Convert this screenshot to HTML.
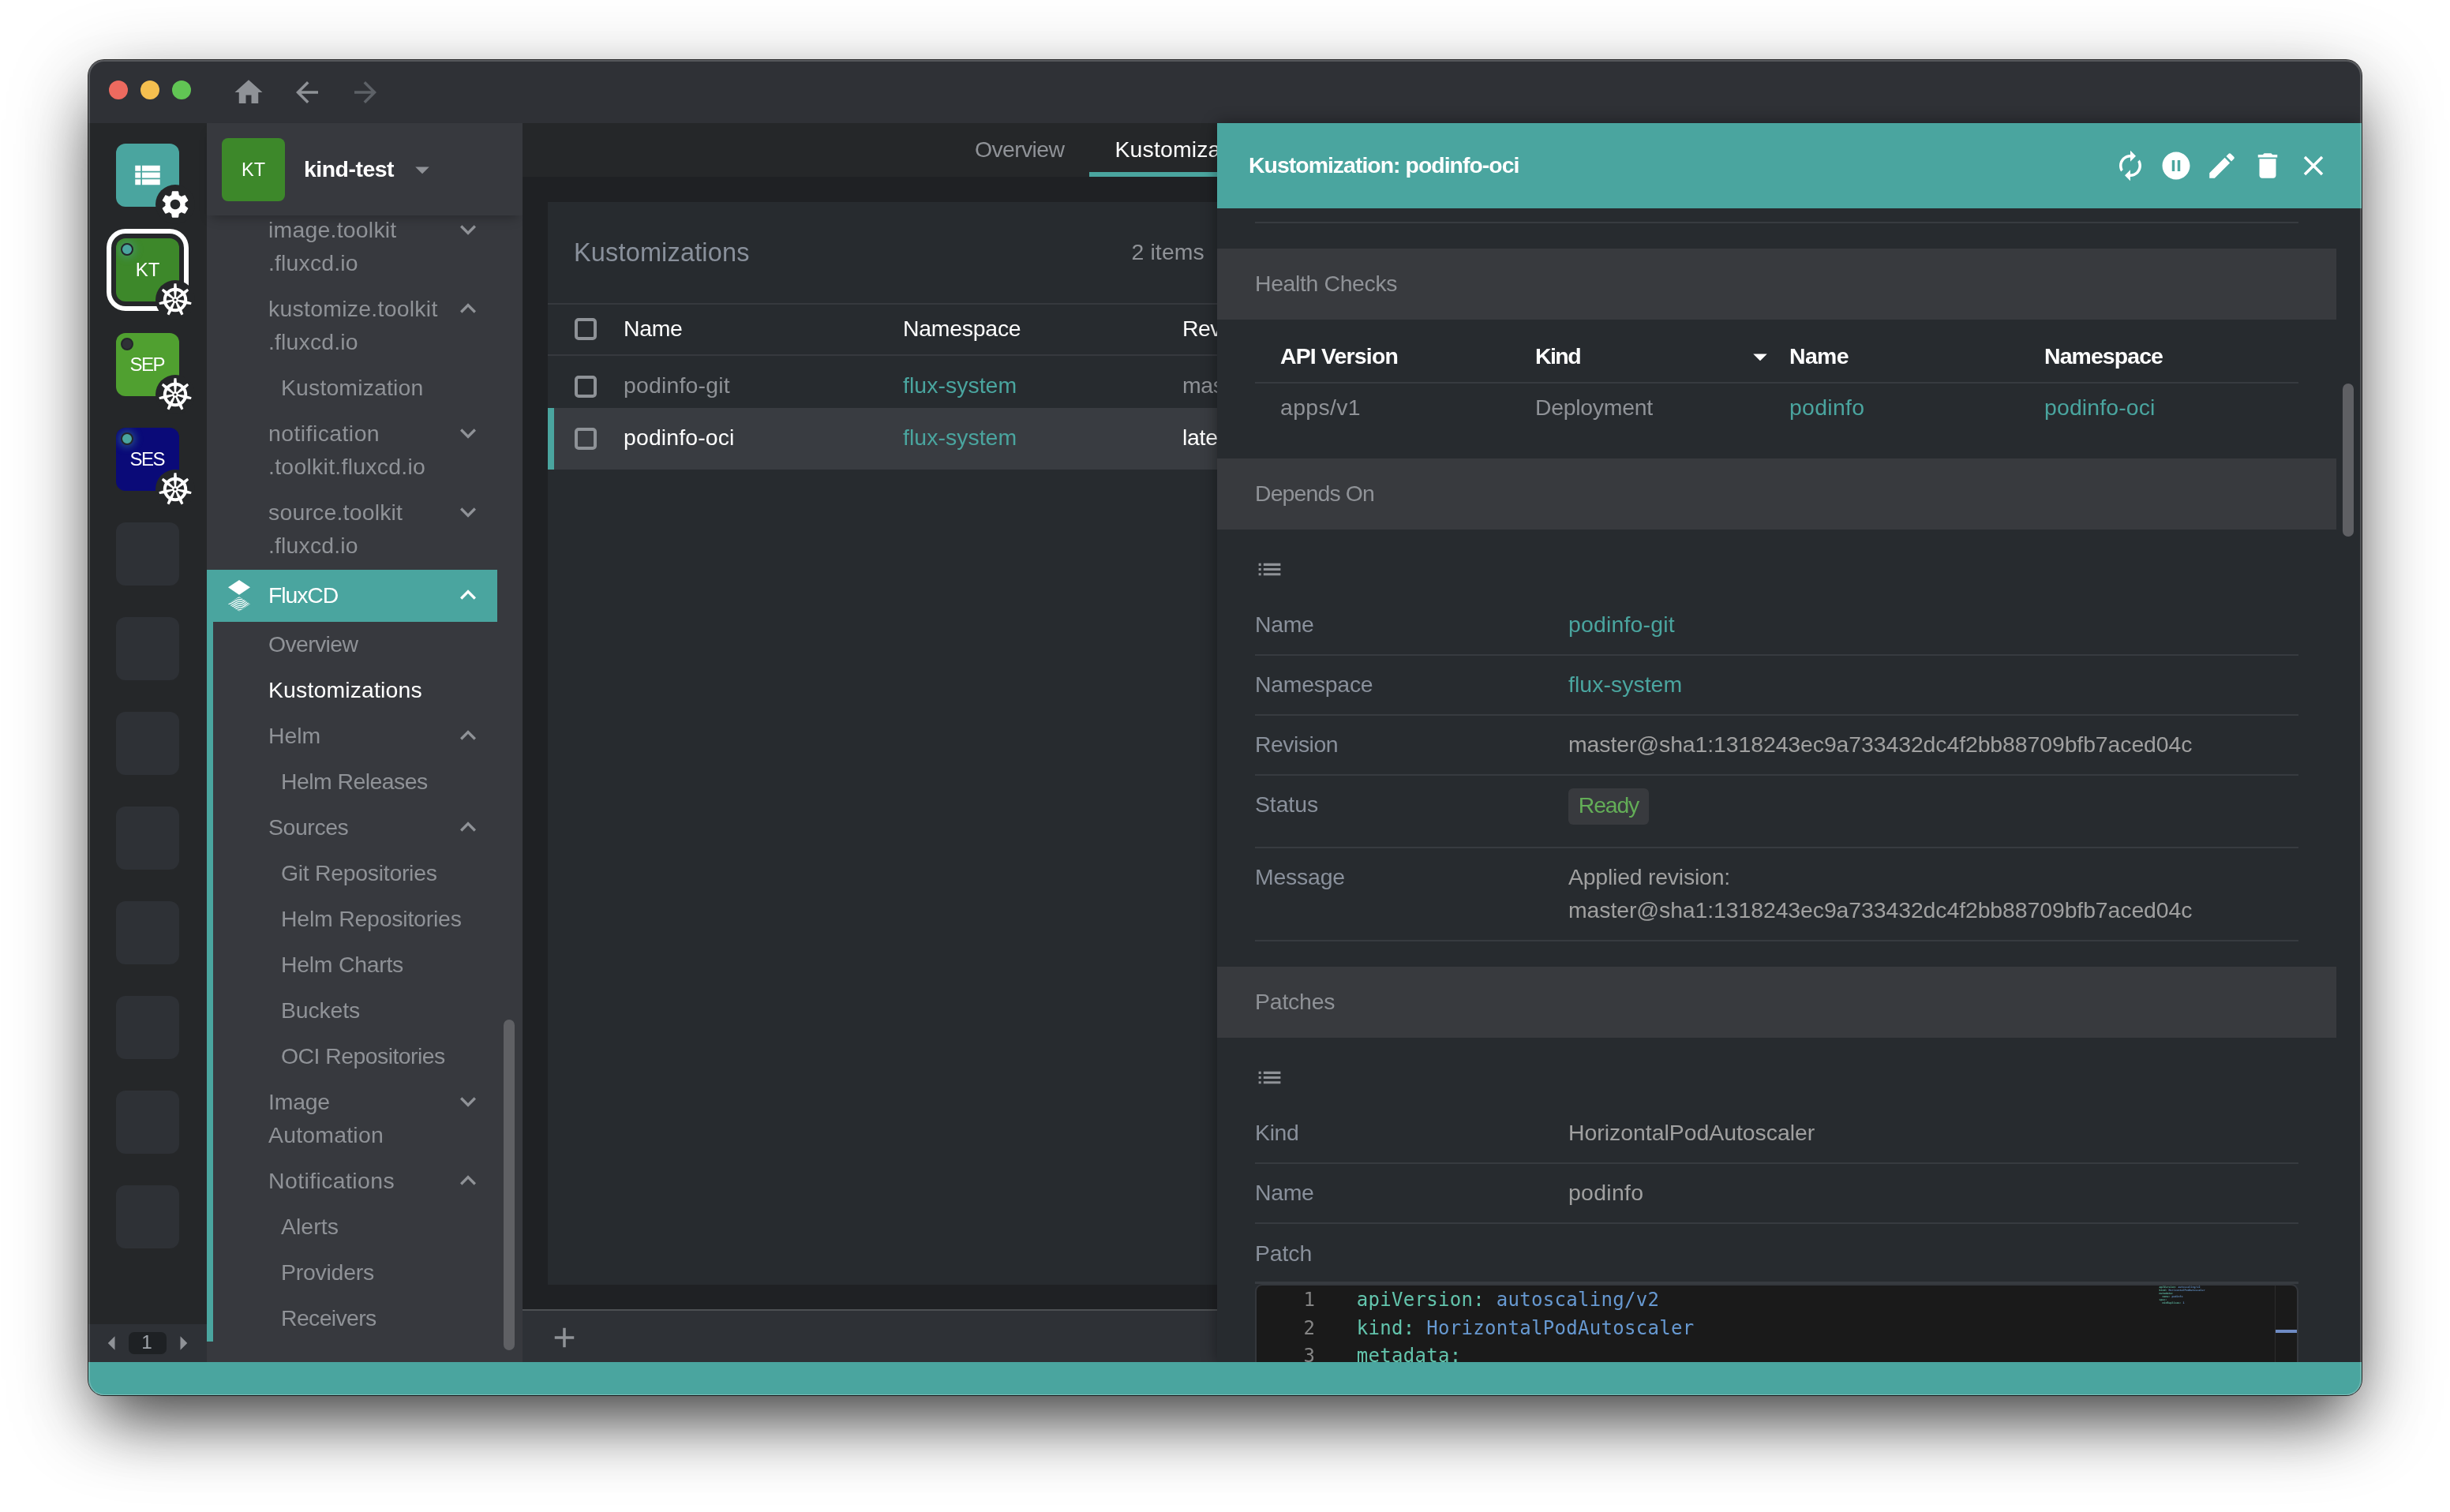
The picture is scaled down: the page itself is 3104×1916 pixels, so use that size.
<!DOCTYPE html>
<html lang="en"><head><meta charset="utf-8"><title>Lens - Kustomization: podinfo-oci</title>
<style>
html,body{margin:0;padding:0;background:#fff;}
body{width:3104px;height:1916px;position:relative;overflow:hidden;font-family:"Liberation Sans",sans-serif;}
.win{position:absolute;left:112px;top:76px;width:2880px;height:1692px;border-radius:20px;overflow:hidden;background:#1e2124;will-change:transform;}
.shadow{position:absolute;left:112px;top:76px;width:2880px;height:1692px;border-radius:20px;
 box-shadow:0 0 0 1px rgba(0,0,0,.8),0 28px 110px -10px rgba(0,0,0,.39),0 43px 82px -18px rgba(0,0,0,.62);}
.rim{position:absolute;left:112px;top:76px;width:2880px;height:1692px;border-radius:20px;box-sizing:border-box;
 border:2px solid rgba(255,255,255,.2);border-bottom:1px solid rgba(255,255,255,.28);pointer-events:none;}
.stage{position:absolute;left:-112px;top:-76px;width:3104px;height:1916px;}
.b,.t,.ic,.clip{position:absolute;}
.t{white-space:nowrap;}
.m{font-family:"DejaVu Sans Mono","Liberation Mono",monospace;}
.clip{overflow:hidden;}
</style></head>
<body>
<div class="shadow"></div>
<div class="win"><div class="stage">
<div class="b" style="left:112px;top:76px;width:2880px;height:80px;background:#2f3136;"></div>
<div class="b" style="left:138px;top:102px;width:24px;height:24px;border-radius:50%;background:#ed6a5f"></div>
<div class="b" style="left:178px;top:102px;width:24px;height:24px;border-radius:50%;background:#f5bf4f"></div>
<div class="b" style="left:218px;top:102px;width:24px;height:24px;border-radius:50%;background:#61c554"></div>
<svg class="ic" style="left:294.1px;top:96.1px;width:42px;height:42px;" viewBox="0 0 24 24"><path fill="#8f9297" d="M10 20v-6h4v6h5v-8h3L12 3 2 12h3v8z"/></svg>
<svg class="ic" style="left:367.9px;top:95.9px;width:42px;height:42px;" viewBox="0 0 24 24"><path fill="#8f9297" d="M20 11H7.83l5.59-5.59L12 4l-8 8 8 8 1.41-1.41L7.83 13H20v-2z"/></svg>
<svg class="ic" style="left:441.9px;top:95.9px;width:42px;height:42px;" viewBox="0 0 24 24"><path fill="#5d6167" d="M12 4l-1.41 1.41L16.17 11H4v2h12.17l-5.58 5.59L12 20l8-8z"/></svg>
<div class="b" style="left:112px;top:156px;width:150px;height:1570px;background:#252729;"></div>
<div class="b" style="left:147px;top:662px;width:80px;height:80px;background:#2e3136;border-radius:12px"></div>
<div class="b" style="left:147px;top:782px;width:80px;height:80px;background:#2e3136;border-radius:12px"></div>
<div class="b" style="left:147px;top:902px;width:80px;height:80px;background:#2e3136;border-radius:12px"></div>
<div class="b" style="left:147px;top:1022px;width:80px;height:80px;background:#2e3136;border-radius:12px"></div>
<div class="b" style="left:147px;top:1142px;width:80px;height:80px;background:#2e3136;border-radius:12px"></div>
<div class="b" style="left:147px;top:1262px;width:80px;height:80px;background:#2e3136;border-radius:12px"></div>
<div class="b" style="left:147px;top:1382px;width:80px;height:80px;background:#2e3136;border-radius:12px"></div>
<div class="b" style="left:147px;top:1502px;width:80px;height:80px;background:#2e3136;border-radius:12px"></div>
<div class="b" style="left:147px;top:182px;width:80px;height:80px;background:#4aa59f;border-radius:12px"></div>
<svg class="ic" style="left:166.0px;top:201.0px;width:42px;height:42px;" viewBox="0 0 24 24"><path fill="#fff" d="M3 14h4v-4H3v4zm0 5h4v-4H3v4zM3 9h4V5H3v4zm5 5h13v-4H8v4zm0 5h13v-4H8v4zM8 5v4h13V5H8z"/></svg>
<div class="b" style="left:197px;top:234.4px;width:50px;height:50px;border-radius:50%;background:#252729"></div>
<svg class="ic" style="left:201.0px;top:238.4px;width:42px;height:42px;" viewBox="0 0 24 24"><path fill="#fff" d="M19.14 12.94c.04-.3.06-.61.06-.94 0-.32-.02-.64-.07-.94l2.03-1.58c.18-.14.23-.41.12-.61l-1.92-3.32c-.12-.22-.37-.29-.59-.22l-2.39.96c-.5-.38-1.03-.7-1.62-.94l-.36-2.54c-.04-.24-.24-.41-.48-.41h-3.84c-.24 0-.43.17-.47.41l-.36 2.54c-.59.24-1.13.57-1.62.94l-2.39-.96c-.22-.08-.47 0-.59.22L2.74 8.87c-.12.21-.08.47.12.61l2.03 1.58c-.05.3-.09.63-.09.94s.02.64.07.94l-2.03 1.58c-.18.14-.23.41-.12.61l1.92 3.32c.12.22.37.29.59.22l2.39-.96c.5.38 1.03.7 1.62.94l.36 2.54c.05.24.24.41.48.41h3.84c.24 0 .44-.17.47-.41l.36-2.54c.59-.24 1.13-.56 1.62-.94l2.39.96c.22.08.47 0 .59-.22l1.92-3.32c.12-.22.07-.47-.12-.61l-2.01-1.58zM12 15.6c-1.98 0-3.6-1.62-3.6-3.6s1.62-3.6 3.6-3.6 3.6 1.62 3.6 3.6-1.62 3.6-3.6 3.6z"/></svg>
<div class="b" style="left:147px;top:302px;width:80px;height:80px;background:#3d882a;border-radius:12px;box-shadow:0 0 0 6px #252729,0 0 0 12px #fff;"><div class="b" style="left:0;top:0;width:80px;height:80px;border-radius:12px;overflow:hidden"><div class="b" style="left:6px;top:6px;width:16px;height:16px;box-sizing:border-box;border-radius:50%;background:#4aa59f;border:2px solid #23262a;box-shadow:0 0 10px 3px #4aa59f66;"></div></div><div class="t" style="left:0;top:0;width:80px;height:80px;line-height:80px;text-align:center;font-size:24px;color:#fff">KT</div></div>
<div class="b" style="left:197px;top:355px;width:50px;height:50px;border-radius:50%;background:#252729"></div>
<svg class="ic" style="left:198.0px;top:356.0px;width:48px;height:48px" viewBox="-24 -24 48 48"><circle r="13.2" fill="none" stroke="#fff" stroke-width="4"/><polygon fill="#fff" points="0.90,-2.00 2.10,-13.20 1.50,-20.80 -1.50,-20.80 -2.10,-13.20 -0.90,-2.00"/><polygon fill="#fff" points="2.12,-0.54 11.63,-6.59 17.20,-11.80 15.33,-14.14 9.01,-9.87 1.00,-1.95"/><polygon fill="#fff" points="1.75,1.32 12.40,4.98 19.94,6.09 20.61,3.17 13.34,0.89 2.15,-0.43"/><polygon fill="#fff" points="0.06,2.19 3.84,12.80 7.67,19.39 10.38,18.09 7.62,10.98 1.68,1.41"/><polygon fill="#fff" points="-1.68,1.41 -7.62,10.98 -10.38,18.09 -7.67,19.39 -3.84,12.80 -0.06,2.19"/><polygon fill="#fff" points="-2.15,-0.43 -13.34,0.89 -20.61,3.17 -19.94,6.09 -12.40,4.98 -1.75,1.32"/><polygon fill="#fff" points="-1.00,-1.95 -9.01,-9.87 -15.33,-14.14 -17.20,-11.80 -11.63,-6.59 -2.12,-0.54"/><circle r="3.8" fill="#fff"/><circle r="1.6" fill="#252729"/></svg>
<div class="b" style="left:147px;top:422px;width:80px;height:80px;background:#50a030;border-radius:12px;"><div class="b" style="left:0;top:0;width:80px;height:80px;border-radius:12px;overflow:hidden"><div class="b" style="left:6px;top:6px;width:16px;height:16px;box-sizing:border-box;border-radius:50%;background:#2f3136;border:2px solid #23262a;"></div></div><div class="t" style="left:0;top:0;width:80px;height:80px;line-height:80px;text-align:center;font-size:24px;letter-spacing:-1.4px;text-indent:-1.4px;color:#fff">SEP</div></div>
<div class="b" style="left:197px;top:475px;width:50px;height:50px;border-radius:50%;background:#252729"></div>
<svg class="ic" style="left:198.0px;top:476.0px;width:48px;height:48px" viewBox="-24 -24 48 48"><circle r="13.2" fill="none" stroke="#fff" stroke-width="4"/><polygon fill="#fff" points="0.90,-2.00 2.10,-13.20 1.50,-20.80 -1.50,-20.80 -2.10,-13.20 -0.90,-2.00"/><polygon fill="#fff" points="2.12,-0.54 11.63,-6.59 17.20,-11.80 15.33,-14.14 9.01,-9.87 1.00,-1.95"/><polygon fill="#fff" points="1.75,1.32 12.40,4.98 19.94,6.09 20.61,3.17 13.34,0.89 2.15,-0.43"/><polygon fill="#fff" points="0.06,2.19 3.84,12.80 7.67,19.39 10.38,18.09 7.62,10.98 1.68,1.41"/><polygon fill="#fff" points="-1.68,1.41 -7.62,10.98 -10.38,18.09 -7.67,19.39 -3.84,12.80 -0.06,2.19"/><polygon fill="#fff" points="-2.15,-0.43 -13.34,0.89 -20.61,3.17 -19.94,6.09 -12.40,4.98 -1.75,1.32"/><polygon fill="#fff" points="-1.00,-1.95 -9.01,-9.87 -15.33,-14.14 -17.20,-11.80 -11.63,-6.59 -2.12,-0.54"/><circle r="3.8" fill="#fff"/><circle r="1.6" fill="#252729"/></svg>
<div class="b" style="left:147px;top:542px;width:80px;height:80px;background:#0a0a78;border-radius:12px;"><div class="b" style="left:0;top:0;width:80px;height:80px;border-radius:12px;overflow:hidden"><div class="b" style="left:6px;top:6px;width:16px;height:16px;box-sizing:border-box;border-radius:50%;background:#4aa59f;border:2px solid #23262a;box-shadow:0 0 10px 3px #4aa59f66;"></div></div><div class="t" style="left:0;top:0;width:80px;height:80px;line-height:80px;text-align:center;font-size:24px;letter-spacing:-1.4px;text-indent:-1.4px;color:#fff">SES</div></div>
<div class="b" style="left:197px;top:595px;width:50px;height:50px;border-radius:50%;background:#252729"></div>
<svg class="ic" style="left:198.0px;top:596.0px;width:48px;height:48px" viewBox="-24 -24 48 48"><circle r="13.2" fill="none" stroke="#fff" stroke-width="4"/><polygon fill="#fff" points="0.90,-2.00 2.10,-13.20 1.50,-20.80 -1.50,-20.80 -2.10,-13.20 -0.90,-2.00"/><polygon fill="#fff" points="2.12,-0.54 11.63,-6.59 17.20,-11.80 15.33,-14.14 9.01,-9.87 1.00,-1.95"/><polygon fill="#fff" points="1.75,1.32 12.40,4.98 19.94,6.09 20.61,3.17 13.34,0.89 2.15,-0.43"/><polygon fill="#fff" points="0.06,2.19 3.84,12.80 7.67,19.39 10.38,18.09 7.62,10.98 1.68,1.41"/><polygon fill="#fff" points="-1.68,1.41 -7.62,10.98 -10.38,18.09 -7.67,19.39 -3.84,12.80 -0.06,2.19"/><polygon fill="#fff" points="-2.15,-0.43 -13.34,0.89 -20.61,3.17 -19.94,6.09 -12.40,4.98 -1.75,1.32"/><polygon fill="#fff" points="-1.00,-1.95 -9.01,-9.87 -15.33,-14.14 -17.20,-11.80 -11.63,-6.59 -2.12,-0.54"/><circle r="3.8" fill="#fff"/><circle r="1.6" fill="#252729"/></svg>
<div class="b" style="left:112px;top:1678px;width:150px;height:48px;background:#2e3136;"></div>
<svg class="ic" style="left:121.4px;top:1681.0px;width:42px;height:42px;" viewBox="0 0 24 24"><path fill="#8f9297" d="M14 7l-5 5 5 5V7z"/></svg>
<svg class="ic" style="left:210.7px;top:1681.0px;width:42px;height:42px;" viewBox="0 0 24 24"><path fill="#8f9297" d="M10 17l5-5-5-5v10z"/></svg>
<div class="b" style="left:163px;top:1688px;width:48px;height:28px;background:#1e2124;border-radius:7px"></div>
<div class="t" style="left:162.0px;top:1683.4px;font-size:24.36px;line-height:36px;color:#a0a5ab;width:48px;text-align:center;"><span style="letter-spacing:-0.086px">1</span></div>
<div class="b" style="left:262px;top:156px;width:400px;height:1570px;background:#37393e;"></div>
<div class="clip" style="left:262px;top:273px;width:400px;height:1453px"><div class="stage" style="left:-262px;top:-273px">
<div class="t" style="left:340px;top:269.5px;font-size:28.42px;line-height:42px;color:#8f9297"><span style="letter-spacing:0.232px">image.toolkit</span><br><span style="letter-spacing:0.165px">.fluxcd.io</span></div><svg class="ic" style="left:573.0px;top:271.3px;width:40px;height:40px;" viewBox="0 0 24 24"><path fill="#8f9297" d="M7.41 8.59L12 13.17l4.59-4.58L18 10l-6 6-6-6 1.41-1.41z"/></svg>
<div class="t" style="left:340px;top:369.5px;font-size:28.42px;line-height:42px;color:#8f9297"><span style="letter-spacing:0.272px">kustomize.toolkit</span><br><span style="letter-spacing:0.165px">.fluxcd.io</span></div><svg class="ic" style="left:573.0px;top:371.3px;width:40px;height:40px;" viewBox="0 0 24 24"><path fill="#8f9297" d="M7.41 15.41L12 10.83l4.59 4.58L18 14l-6-6-6 6z"/></svg>
<div class="t" style="left:356px;top:469.5px;font-size:28.42px;line-height:42px;color:#8f9297"><span style="letter-spacing:0.147px">Kustomization</span></div>
<div class="t" style="left:340px;top:527.5px;font-size:28.42px;line-height:42px;color:#8f9297"><span style="letter-spacing:0.442px">notification</span><br><span style="letter-spacing:0.275px">.toolkit.fluxcd.io</span></div><svg class="ic" style="left:573.0px;top:529.3px;width:40px;height:40px;" viewBox="0 0 24 24"><path fill="#8f9297" d="M7.41 8.59L12 13.17l4.59-4.58L18 10l-6 6-6-6 1.41-1.41z"/></svg>
<div class="t" style="left:340px;top:627.5px;font-size:28.42px;line-height:42px;color:#8f9297"><span style="letter-spacing:0.201px">source.toolkit</span><br><span style="letter-spacing:0.165px">.fluxcd.io</span></div><svg class="ic" style="left:573.0px;top:629.3px;width:40px;height:40px;" viewBox="0 0 24 24"><path fill="#8f9297" d="M7.41 8.59L12 13.17l4.59-4.58L18 10l-6 6-6-6 1.41-1.41z"/></svg>
<div class="b" style="left:262px;top:722px;width:368px;height:66px;background:#4aa59f;"></div><div class="t" style="left:340px;top:732.5px;font-size:28.42px;line-height:42px;color:#fff"><span style="letter-spacing:-1.091px">FluxCD</span></div><svg class="ic" style="left:573.0px;top:734.3px;width:40px;height:40px;" viewBox="0 0 24 24"><path fill="#fff" d="M7.41 15.41L12 10.83l4.59 4.58L18 14l-6-6-6 6z"/></svg>
<svg class="ic" style="left:289.0px;top:735.0px;width:28px;height:40px" viewBox="0 0 28 40"><path fill="#fff" d="M14 0 L28 9.3 L14 18.7 L0 9.3 Z"/><defs><clipPath id="fxc"><path d="M14 21 L28 30.3 L14 39.7 L0 30.3 Z"/></clipPath></defs><g clip-path="url(#fxc)" fill="none" stroke="#fff" stroke-width="1.25"><path d="M-2 22.8 C 6 23.8, 9 15.8, 15 16.8 S 24 8.8, 30 9.8"/><path d="M-2 25.4 C 6 26.4, 9 18.4, 15 19.4 S 24 11.4, 30 12.4"/><path d="M-2 28.0 C 6 29.0, 9 21.0, 15 22.0 S 24 14.0, 30 15.0"/><path d="M-2 30.6 C 6 31.6, 9 23.6, 15 24.6 S 24 16.6, 30 17.6"/><path d="M-2 33.2 C 6 34.2, 9 26.2, 15 27.2 S 24 19.2, 30 20.2"/><path d="M-2 35.8 C 6 36.8, 9 28.8, 15 29.8 S 24 21.8, 30 22.8"/><path d="M-2 38.4 C 6 39.4, 9 31.4, 15 32.4 S 24 24.4, 30 25.4"/><path d="M-2 41.0 C 6 42.0, 9 34.0, 15 35.0 S 24 27.0, 30 28.0"/><path d="M-2 43.6 C 6 44.6, 9 36.6, 15 37.6 S 24 29.6, 30 30.6"/><path d="M-2 46.2 C 6 47.2, 9 39.2, 15 40.2 S 24 32.2, 30 33.2"/><path d="M-2 48.8 C 6 49.8, 9 41.8, 15 42.8 S 24 34.8, 30 35.8"/><path d="M-2 51.4 C 6 52.4, 9 44.4, 15 45.4 S 24 37.4, 30 38.4"/><path d="M-2 54.0 C 6 55.0, 9 47.0, 15 48.0 S 24 40.0, 30 41.0"/><path d="M-2 56.6 C 6 57.6, 9 49.6, 15 50.6 S 24 42.6, 30 43.6"/></g></svg>
<div class="b" style="left:262px;top:788px;width:8px;height:912px;background:#4aa59f;"></div>
<div class="t" style="left:340px;top:794.5px;font-size:28.42px;line-height:42px;color:#8f9297"><span style="letter-spacing:-0.631px">Overview</span></div>
<div class="t" style="left:340px;top:852.5px;font-size:28.42px;line-height:42px;color:#fff"><span style="letter-spacing:0.153px">Kustomizations</span></div>
<div class="t" style="left:340px;top:910.5px;font-size:28.42px;line-height:42px;color:#8f9297"><span style="letter-spacing:-0.042px">Helm</span></div><svg class="ic" style="left:573.0px;top:912.3px;width:40px;height:40px;" viewBox="0 0 24 24"><path fill="#8f9297" d="M7.41 15.41L12 10.83l4.59 4.58L18 14l-6-6-6 6z"/></svg>
<div class="t" style="left:356px;top:968.5px;font-size:28.42px;line-height:42px;color:#8f9297"><span style="letter-spacing:-0.531px">Helm Releases</span></div>
<div class="t" style="left:340px;top:1026.5px;font-size:28.42px;line-height:42px;color:#8f9297"><span style="letter-spacing:-0.402px">Sources</span></div><svg class="ic" style="left:573.0px;top:1028.3px;width:40px;height:40px;" viewBox="0 0 24 24"><path fill="#8f9297" d="M7.41 15.41L12 10.83l4.59 4.58L18 14l-6-6-6 6z"/></svg>
<div class="t" style="left:356px;top:1084.5px;font-size:28.42px;line-height:42px;color:#8f9297"><span style="letter-spacing:-0.281px">Git Repositories</span></div>
<div class="t" style="left:356px;top:1142.5px;font-size:28.42px;line-height:42px;color:#8f9297"><span style="letter-spacing:-0.199px">Helm Repositories</span></div>
<div class="t" style="left:356px;top:1200.5px;font-size:28.42px;line-height:42px;color:#8f9297"><span style="letter-spacing:-0.259px">Helm Charts</span></div>
<div class="t" style="left:356px;top:1258.5px;font-size:28.42px;line-height:42px;color:#8f9297"><span style="letter-spacing:-0.133px">Buckets</span></div>
<div class="t" style="left:356px;top:1316.5px;font-size:28.42px;line-height:42px;color:#8f9297"><span style="letter-spacing:-0.539px">OCI Repositories</span></div>
<div class="t" style="left:340px;top:1374.5px;font-size:28.42px;line-height:42px;color:#8f9297"><span style="letter-spacing:-0.205px">Image</span><br><span style="letter-spacing:0.223px">Automation</span></div><svg class="ic" style="left:573.0px;top:1376.3px;width:40px;height:40px;" viewBox="0 0 24 24"><path fill="#8f9297" d="M7.41 8.59L12 13.17l4.59-4.58L18 10l-6 6-6-6 1.41-1.41z"/></svg>
<div class="t" style="left:340px;top:1474.5px;font-size:28.42px;line-height:42px;color:#8f9297"><span style="letter-spacing:0.410px">Notifications</span></div><svg class="ic" style="left:573.0px;top:1476.3px;width:40px;height:40px;" viewBox="0 0 24 24"><path fill="#8f9297" d="M7.41 15.41L12 10.83l4.59 4.58L18 14l-6-6-6 6z"/></svg>
<div class="t" style="left:356px;top:1532.5px;font-size:28.42px;line-height:42px;color:#8f9297"><span style="letter-spacing:0.055px">Alerts</span></div>
<div class="t" style="left:356px;top:1590.5px;font-size:28.42px;line-height:42px;color:#8f9297"><span style="letter-spacing:-0.220px">Providers</span></div>
<div class="t" style="left:356px;top:1648.5px;font-size:28.42px;line-height:42px;color:#8f9297"><span style="letter-spacing:-0.625px">Receivers</span></div>
</div></div>
<div class="b" style="left:638px;top:1292px;width:14px;height:419px;background:#5f6064;border-radius:7px"></div>
<div class="b" style="left:262px;top:156px;width:400px;height:117px;background:#37393e;box-shadow:0 8px 14px -6px rgba(0,0,0,.3)"></div>
<div class="b" style="left:281px;top:175px;width:80px;height:80px;background:#3d882a;border-radius:8px"></div>
<div class="t" style="left:281px;top:175px;width:80px;height:80px;line-height:80px;text-align:center;font-size:23.5px;color:#fff">KT</div>
<div class="t" style="left:385.0px;top:193.0px;font-size:28.42px;line-height:42px;color:#fff;font-weight:700;"><span style="letter-spacing:-0.486px">kind-test</span></div>
<svg class="ic" style="left:514.3px;top:193.8px;width:42px;height:42px;" viewBox="0 0 24 24"><path fill="#8f9297" d="M7 10l5 5 5-5z"/></svg>
<div class="b" style="left:662px;top:156px;width:2330px;height:1570px;background:#1f2124;"></div>
<div class="b" style="left:662px;top:156px;width:2330px;height:68px;background:#252729;"></div>
<div class="t" style="left:1235.0px;top:168.0px;font-size:28.42px;line-height:42px;color:#8f9297;"><span style="letter-spacing:-0.631px">Overview</span></div>
<div class="t" style="left:1412.5px;top:168.0px;font-size:28.42px;line-height:42px;color:#fff;"><span style="letter-spacing:0.153px">Kustomizations</span></div>
<div class="b" style="left:1380px;top:218px;width:260px;height:6px;background:#4aa59f;"></div>
<div class="b" style="left:694px;top:256px;width:2266px;height:1372px;background:#272b2f;"></div>
<div class="t" style="left:727.0px;top:295.7px;font-size:32.48px;line-height:48px;color:#89909b;"><span style="letter-spacing:0.173px">Kustomizations</span></div>
<div class="t" style="left:1433.5px;top:298.2px;font-size:28.42px;line-height:42px;color:#8f9297;"><span style="letter-spacing:0.121px">2 items</span></div>
<div class="b" style="left:694px;top:384px;width:2266px;height:2px;background:#36393e;"></div>
<div class="b" style="left:694px;top:449px;width:2266px;height:2px;background:#36393e;"></div>
<div class="b" style="left:728px;top:403px;width:28px;height:28px;box-sizing:border-box;border:4px solid #8e9297;border-radius:5px"></div>
<div class="t" style="left:790.0px;top:395.2px;font-size:28.42px;line-height:42px;color:#fff;"><span style="letter-spacing:-0.304px">Name</span></div>
<div class="t" style="left:1144.0px;top:395.2px;font-size:28.42px;line-height:42px;color:#fff;"><span style="letter-spacing:-0.238px">Namespace</span></div>
<div class="t" style="left:1498.0px;top:395.2px;font-size:28.42px;line-height:42px;color:#fff;"><span style="letter-spacing:-0.482px">Revision</span></div>
<div class="b" style="left:728px;top:476px;width:28px;height:28px;box-sizing:border-box;border:4px solid #8e9297;border-radius:5px"></div>
<div class="t" style="left:790.0px;top:466.8px;font-size:28.42px;line-height:42px;color:#8f9297;"><span style="letter-spacing:0.193px">podinfo-git</span></div>
<div class="t" style="left:1144.0px;top:466.8px;font-size:28.42px;line-height:42px;color:#4aa59f;"><span style="letter-spacing:0.049px">flux-system</span></div>
<div class="t" style="left:1498.0px;top:466.8px;font-size:28.42px;line-height:42px;color:#8f9297;white-space:nowrap;"><span style="letter-spacing:-0.312px">master@sha1:1318243e</span></div>
<div class="b" style="left:694px;top:517px;width:2266px;height:78px;background:#393c41;"></div>
<div class="b" style="left:694px;top:517px;width:8px;height:78px;background:#4aa59f;"></div>
<div class="b" style="left:728px;top:542px;width:28px;height:28px;box-sizing:border-box;border:4px solid #8e9297;border-radius:5px"></div>
<div class="t" style="left:790.0px;top:533.2px;font-size:28.42px;line-height:42px;color:#fff;"><span style="letter-spacing:0.143px">podinfo-oci</span></div>
<div class="t" style="left:1144.0px;top:533.2px;font-size:28.42px;line-height:42px;color:#4aa59f;"><span style="letter-spacing:0.049px">flux-system</span></div>
<div class="t" style="left:1498.0px;top:533.2px;font-size:28.42px;line-height:42px;color:#fff;white-space:nowrap;"><span style="letter-spacing:-0.290px">latest@sha256:</span></div>
<div class="b" style="left:662px;top:1660px;width:2330px;height:66px;background:#2e3136;"></div>
<div class="b" style="left:662px;top:1659px;width:2330px;height:2px;background:#4d5053;"></div>
<svg class="ic" style="left:693.9px;top:1674.0px;width:42px;height:42px;" viewBox="0 0 24 24"><path fill="#8f9297" d="M19 13h-6v6h-2v-6H5v-2h6V5h2v6h6v2z"/></svg>
<div class="b" style="left:1542px;top:156px;width:1450px;height:1570px;background:#272b2f;box-shadow:0 0 18px rgba(0,0,0,.4)"></div>
<div class="b" style="left:1542px;top:156px;width:1450px;height:108px;background:#4aa59f;"></div>
<div class="t" style="left:1582.0px;top:187.9px;font-size:28.42px;line-height:42px;color:#fff;font-weight:700;"><span style="letter-spacing:-0.968px">Kustomization: podinfo-oci</span></div>
<svg class="ic" style="left:2678.4px;top:189.0px;width:42px;height:42px;" viewBox="0 0 24 24"><path fill="#fff" d="M12 6v3l4-4-4-4v3c-4.42 0-8 3.58-8 8 0 1.57.46 3.03 1.24 4.26L6.7 14.8c-.45-.83-.7-1.79-.7-2.8 0-3.31 2.69-6 6-6zm6.76 1.74L17.3 9.2c.44.84.7 1.79.7 2.8 0 3.31-2.69 6-6 6v-3l-4 4 4 4v-3c4.42 0 8-3.58 8-8 0-1.57-.46-3.03-1.24-4.26z"/></svg>
<svg class="ic" style="left:2735.8px;top:189.0px;width:42px;height:42px;" viewBox="0 0 24 24"><path fill="#fff" d="M12 2C6.48 2 2 6.48 2 12s4.48 10 10 10 10-4.48 10-10S17.52 2 12 2zm-1 14H9V8h2v8zm4 0h-2V8h2v8z"/></svg>
<svg class="ic" style="left:2793.9px;top:189.0px;width:42px;height:42px;" viewBox="0 0 24 24"><path fill="#fff" d="M3 17.25V21h3.75L17.81 9.94l-3.75-3.75L3 17.25zM20.71 7.04c.39-.39.39-1.02 0-1.41l-2.34-2.34c-.39-.39-1.02-.39-1.41 0l-1.83 1.83 3.75 3.75 1.83-1.83z"/></svg>
<svg class="ic" style="left:2851.7px;top:189.0px;width:42px;height:42px;" viewBox="0 0 24 24"><path fill="#fff" d="M6 19c0 1.1.9 2 2 2h8c1.1 0 2-.9 2-2V7H6v12zM19 4h-3.5l-1-1h-5l-1 1H5v2h14V4z"/></svg>
<svg class="ic" style="left:2909.8px;top:189.0px;width:42px;height:42px;" viewBox="0 0 24 24"><path fill="#fff" d="M19 6.41L17.59 5 12 10.59 6.41 5 5 6.41 10.59 12 5 17.59 6.41 19 12 13.41 17.59 19 19 17.59 13.41 12z"/></svg>
<div class="b" style="left:1590px;top:281px;width:1322px;height:2px;background:#373b40;"></div>
<div class="b" style="left:1542px;top:315px;width:1418px;height:90px;background:#383a3e;"></div><div class="t" style="left:1590.0px;top:337.8px;font-size:28.42px;line-height:42px;color:#8f9297;"><span style="letter-spacing:-0.358px">Health Checks</span></div>
<div class="t" style="left:1622.0px;top:429.7px;font-size:28.42px;line-height:42px;color:#fff;font-weight:700;"><span style="letter-spacing:-0.807px">API Version</span></div>
<div class="t" style="left:1945.0px;top:429.7px;font-size:28.42px;line-height:42px;color:#fff;font-weight:700;"><span style="letter-spacing:-1.531px">Kind</span></div>
<svg class="ic" style="left:2208.8px;top:431.0px;width:42px;height:42px;" viewBox="0 0 24 24"><path fill="#fff" d="M7 10l5 5 5-5z"/></svg>
<div class="t" style="left:2267.0px;top:429.7px;font-size:28.42px;line-height:42px;color:#fff;font-weight:700;"><span style="letter-spacing:-0.594px">Name</span></div>
<div class="t" style="left:2590.0px;top:429.7px;font-size:28.42px;line-height:42px;color:#fff;font-weight:700;"><span style="letter-spacing:-0.880px">Namespace</span></div>
<div class="b" style="left:1590px;top:484px;width:1322px;height:2px;background:#373b40;"></div>
<div class="t" style="left:1622.0px;top:494.9px;font-size:28.42px;line-height:42px;color:#8f9297;"><span style="letter-spacing:0.344px">apps/v1</span></div>
<div class="t" style="left:1945.0px;top:494.9px;font-size:28.42px;line-height:42px;color:#8f9297;"><span style="letter-spacing:-0.269px">Deployment</span></div>
<div class="t" style="left:2267.0px;top:494.9px;font-size:28.42px;line-height:42px;color:#4aa59f;"><span style="letter-spacing:0.314px">podinfo</span></div>
<div class="t" style="left:2590.0px;top:494.9px;font-size:28.42px;line-height:42px;color:#4aa59f;"><span style="letter-spacing:0.143px">podinfo-oci</span></div>
<div class="b" style="left:1542px;top:581px;width:1418px;height:90px;background:#383a3e;"></div><div class="t" style="left:1590.0px;top:603.8px;font-size:28.42px;line-height:42px;color:#8f9297;"><span style="letter-spacing:-0.845px">Depends On</span></div>
<svg class="ic" style="left:1589.5px;top:702.5px;width:37px;height:37px;" viewBox="0 0 24 24"><path fill="#8f9297" d="M3 13h2v-2H3v2zm0 4h2v-2H3v2zm0-8h2V7H3v2zm4 4h14v-2H7v2zm0 4h14v-2H7v2zM7 7v2h14V7H7z"/></svg>
<div class="t" style="left:1590.0px;top:769.8px;font-size:28.42px;line-height:42px;color:#89909b;"><span style="letter-spacing:-0.304px">Name</span></div><div class="t" style="left:1987.0px;top:769.8px;font-size:28.42px;line-height:42px;color:#4aa59f;white-space:nowrap;"><span style="letter-spacing:0.193px">podinfo-git</span></div><div class="b" style="left:1590px;top:829px;width:1322px;height:2px;background:#373b40;"></div>
<div class="t" style="left:1590.0px;top:845.8px;font-size:28.42px;line-height:42px;color:#89909b;"><span style="letter-spacing:-0.238px">Namespace</span></div><div class="t" style="left:1987.0px;top:845.8px;font-size:28.42px;line-height:42px;color:#4aa59f;white-space:nowrap;"><span style="letter-spacing:0.049px">flux-system</span></div><div class="b" style="left:1590px;top:905px;width:1322px;height:2px;background:#373b40;"></div>
<div class="t" style="left:1590.0px;top:921.8px;font-size:28.42px;line-height:42px;color:#89909b;"><span style="letter-spacing:-0.482px">Revision</span></div><div class="t" style="left:1987.0px;top:921.8px;font-size:28.42px;line-height:42px;color:#a0a0a0;white-space:nowrap;"><span style="letter-spacing:-0.087px">master@sha1:1318243ec9a733432dc4f2bb88709bfb7aced04c</span></div><div class="b" style="left:1590px;top:981px;width:1322px;height:2px;background:#373b40;"></div>
<div class="t" style="left:1590.0px;top:997.5px;font-size:28.42px;line-height:42px;color:#89909b;"><span style="letter-spacing:-0.090px">Status</span></div>
<div class="b" style="left:1987px;top:999px;width:102px;height:46px;background:#383a3e;border-radius:6px"></div>
<div class="t" style="left:1987.0px;top:999.0px;font-size:28.42px;line-height:42px;color:#63ad57;width:102px;text-align:center;"><span style="letter-spacing:-1.156px">Ready</span></div>
<div class="b" style="left:1590px;top:1073px;width:1322px;height:2px;background:#373b40;"></div>
<div class="t" style="left:1590.0px;top:1089.5px;font-size:28.42px;line-height:42px;color:#89909b;"><span style="letter-spacing:-0.191px">Message</span></div>
<div class="t" style="left:1987.0px;top:1089.5px;font-size:28.42px;line-height:42px;color:#a0a0a0;white-space:nowrap;"><span style="letter-spacing:-0.206px">Applied revision:</span><br><span style="letter-spacing:-0.087px">master@sha1:1318243ec9a733432dc4f2bb88709bfb7aced04c</span></div>
<div class="b" style="left:1590px;top:1191px;width:1322px;height:2px;background:#373b40;"></div>
<div class="b" style="left:1542px;top:1225px;width:1418px;height:90px;background:#383a3e;"></div><div class="t" style="left:1590.0px;top:1247.8px;font-size:28.42px;line-height:42px;color:#8f9297;"><span style="letter-spacing:-0.179px">Patches</span></div>
<svg class="ic" style="left:1589.5px;top:1346.5px;width:37px;height:37px;" viewBox="0 0 24 24"><path fill="#8f9297" d="M3 13h2v-2H3v2zm0 4h2v-2H3v2zm0-8h2V7H3v2zm4 4h14v-2H7v2zm0 4h14v-2H7v2zM7 7v2h14V7H7z"/></svg>
<div class="t" style="left:1590.0px;top:1413.8px;font-size:28.42px;line-height:42px;color:#89909b;"><span style="letter-spacing:-0.317px">Kind</span></div><div class="t" style="left:1987.0px;top:1413.8px;font-size:28.42px;line-height:42px;color:#a0a0a0;white-space:nowrap;"><span style="letter-spacing:-0.014px">HorizontalPodAutoscaler</span></div><div class="b" style="left:1590px;top:1473px;width:1322px;height:2px;background:#373b40;"></div>
<div class="t" style="left:1590.0px;top:1489.8px;font-size:28.42px;line-height:42px;color:#89909b;"><span style="letter-spacing:-0.304px">Name</span></div><div class="t" style="left:1987.0px;top:1489.8px;font-size:28.42px;line-height:42px;color:#a0a0a0;white-space:nowrap;"><span style="letter-spacing:0.314px">podinfo</span></div><div class="b" style="left:1590px;top:1549px;width:1322px;height:2px;background:#373b40;"></div>
<div class="t" style="left:1590.0px;top:1566.6px;font-size:28.42px;line-height:42px;color:#89909b;"><span style="letter-spacing:-0.104px">Patch</span></div>
<div class="b" style="left:1590px;top:1624px;width:1322px;height:3px;background:#373b40;"></div>
<div class="b" style="left:1590px;top:1627px;width:1322px;height:140px;background:#1a1a1a;border:2px solid #34373c;box-sizing:border-box;border-radius:9px 9px 0 0"></div>
<div class="t m" style="left:1620.0px;top:1628.7px;font-size:24px;line-height:36px;color:#858585;width:46px;text-align:right;">1</div>
<div class="t m" style="left:1718.7px;top:1628.7px;font-size:24px;line-height:36px;color:#63c5ad;white-space:pre;letter-spacing:0.3px;"><span style="color:#63c5ad">apiVersion:</span> <span style="color:#6799d1">autoscaling/v2</span></div>
<div class="t m" style="left:1620.0px;top:1664.5px;font-size:24px;line-height:36px;color:#858585;width:46px;text-align:right;">2</div>
<div class="t m" style="left:1718.7px;top:1664.5px;font-size:24px;line-height:36px;color:#63c5ad;white-space:pre;letter-spacing:0.3px;"><span style="color:#63c5ad">kind:</span> <span style="color:#6799d1">HorizontalPodAutoscaler</span></div>
<div class="t m" style="left:1620.0px;top:1700.3px;font-size:24px;line-height:36px;color:#858585;width:46px;text-align:right;">3</div>
<div class="t m" style="left:1718.7px;top:1700.3px;font-size:24px;line-height:36px;color:#63c5ad;white-space:pre;letter-spacing:0.3px;"><span style="color:#63c5ad">metadata:</span> <span style="color:#6799d1"></span></div>
<div class="t m" style="left:2735.5px;top:1629px;font-size:3.33px;line-height:4px;white-space:pre;font-weight:700;opacity:.9"><span style="color:#63c5ad">apiVersion:</span> <span style="color:#6799d1">autoscaling/v2</span>
<span style="color:#63c5ad">kind:</span> <span style="color:#6799d1">HorizontalPodAutoscaler</span>
<span style="color:#63c5ad">metadata:</span>
<span style="color:#63c5ad">  name:</span> <span style="color:#6799d1">podinfo</span>
<span style="color:#63c5ad">spec:</span>
<span style="color:#63c5ad">  minReplicas:</span> <span style="color:#6799d1">1</span></div>
<div class="b" style="left:2882px;top:1629px;width:1px;height:100px;background:#2c2c2c;"></div>
<div class="b" style="left:2883px;top:1685px;width:27px;height:4px;background:#6f8bc4;"></div>
<div class="b" style="left:2968px;top:486px;width:14px;height:194px;background:#5f6064;border-radius:7px"></div>
<div class="b" style="left:112px;top:1726px;width:2880px;height:42px;background:#4aa59f;"></div>
</div></div>
<div class="rim"></div>
</body></html>
